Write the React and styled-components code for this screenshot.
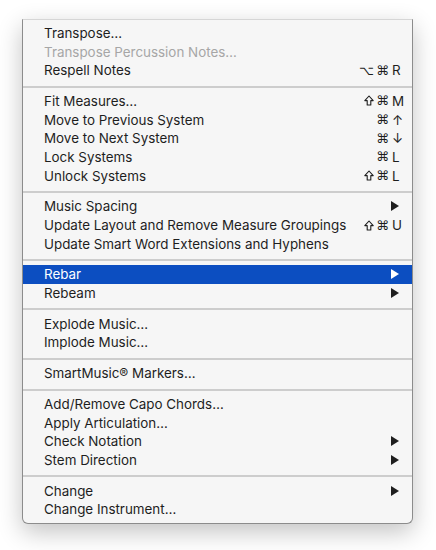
import styled, { createGlobalStyle } from 'styled-components'

const GlobalStyle = createGlobalStyle`
    body {
        margin: 0;
        background: #fff;
        font-family: "Inter", "Liberation Sans", sans-serif;
    }
`

const menu = [
    [
        { label: 'Transpose…' },
        { label: 'Transpose Percussion Notes…', disabled: true },
        { label: 'Respell Notes', mods: ['opt', 'cmd'], keyName: 'R' },
    ],
    [
        { label: 'Fit Measures…', mods: ['shift', 'cmd'], keyName: 'M' },
        { label: 'Move to Previous System', mods: ['cmd'], keyName: '↑' },
        { label: 'Move to Next System', mods: ['cmd'], keyName: '↓' },
        { label: 'Lock Systems', mods: ['cmd'], keyName: 'L' },
        { label: 'Unlock Systems', mods: ['shift', 'cmd'], keyName: 'L' },
    ],
    [
        { label: 'Music Spacing', submenu: true },
        { label: 'Update Layout and Remove Measure Groupings', mods: ['shift', 'cmd'], keyName: 'U' },
        { label: 'Update Smart Word Extensions and Hyphens' },
    ],
    [
        { label: 'Rebar', submenu: true, active: true },
        { label: 'Rebeam', submenu: true },
    ],
    [
        { label: 'Explode Music…' },
        { label: 'Implode Music…' },
    ],
    [
        { label: 'SmartMusic® Markers…' },
    ],
    [
        { label: 'Add/Remove Capo Chords…' },
        { label: 'Apply Articulation…' },
        { label: 'Check Notation', submenu: true },
        { label: 'Stem Direction', submenu: true },
    ],
    [
        { label: 'Change', submenu: true },
        { label: 'Change Instrument…' },
    ],
]

const Arrow = () => (
    <svg width="8" height="10" viewBox="0 0 8 10">
        <path d="M0 0 L8 5 L0 10 Z" fill="currentColor" />
    </svg>
)

// shift key glyph, drawn because the installed fonts render it poorly
const ShiftGlyph = () => (
    <svg width="10" height="11" viewBox="0 0 10 11">
        <path
            d="M5 1 L9.2 5.6 H6.8 V10 H3.2 V5.6 H0.8 Z"
            fill="none"
            stroke="currentColor"
            strokeWidth="1.1"
            strokeLinejoin="round"
        />
    </svg>
)

const modChar = { cmd: '⌘', opt: '⌥' }

const App = () => {
    return (
        <>
            <GlobalStyle />
            <Page>
                <Menu>
                    {menu.map((group, gi) => (
                        <Group key={gi}>
                            {gi > 0 && <Separator />}
                            {group.map((item) => (
                                <Item key={item.label} $active={item.active} $disabled={item.disabled}>
                                    <Label>{item.label}</Label>
                                    {item.keyName && (
                                        <Shortcut>
                                            {item.mods.map((m) =>
                                                m === 'shift' ? (
                                                    <Mod key={m}>
                                                        <ShiftGlyph />
                                                    </Mod>
                                                ) : (
                                                    <Mod key={m}>{modChar[m]}</Mod>
                                                )
                                            )}
                                            <Key>{item.keyName}</Key>
                                        </Shortcut>
                                    )}
                                    {item.submenu && (
                                        <SubArrow>
                                            <Arrow />
                                        </SubArrow>
                                    )}
                                </Item>
                            ))}
                        </Group>
                    ))}
                </Menu>
            </Page>
        </>
    )
}

const Page = styled.div`
    padding: 19px 0 0 22px;
    height: 531px;
`

const Menu = styled.div`
    width: 389px;
    background: #f6f6f6;
    border: 1px solid #8c8c8c;
    border-top-color: #d6d6d6;
    border-radius: 0 0 6px 6px;
    box-shadow: 0 8px 24px rgba(0, 0, 0, 0.24);
    padding: 3.5px 0 4px;
`

const Group = styled.div``

const Separator = styled.div`
    height: 2px;
    background: #cdcdcd;
    margin: 6px 0 4px;
`

const Item = styled.div`
    height: 18.7px;
    display: flex;
    align-items: center;
    padding: 0 10px 0 21px;
    font-size: 13.4px;
    color: ${(p) => (p.$active ? '#fff' : p.$disabled ? '#a6a6a6' : '#1e1e1e')};
    background: ${(p) => (p.$active ? '#0c4ec1' : 'transparent')};
`

const Label = styled.span`
    flex: 1;
    white-space: nowrap;
`

const Shortcut = styled.span`
    display: flex;
    align-items: center;
    gap: 2px;
`

const Mod = styled.span`
    display: flex;
    align-items: center;
    font-family: "DejaVu Sans", sans-serif;
    font-size: 13px;
`

const Key = styled.span`
    width: 10px;
    margin-left: 1px;
    font-family: "Inter", "DejaVu Sans", sans-serif;
    font-size: 13.4px;
`

const SubArrow = styled.span`
    display: flex;
    margin-right: 3px;
`

export default App
